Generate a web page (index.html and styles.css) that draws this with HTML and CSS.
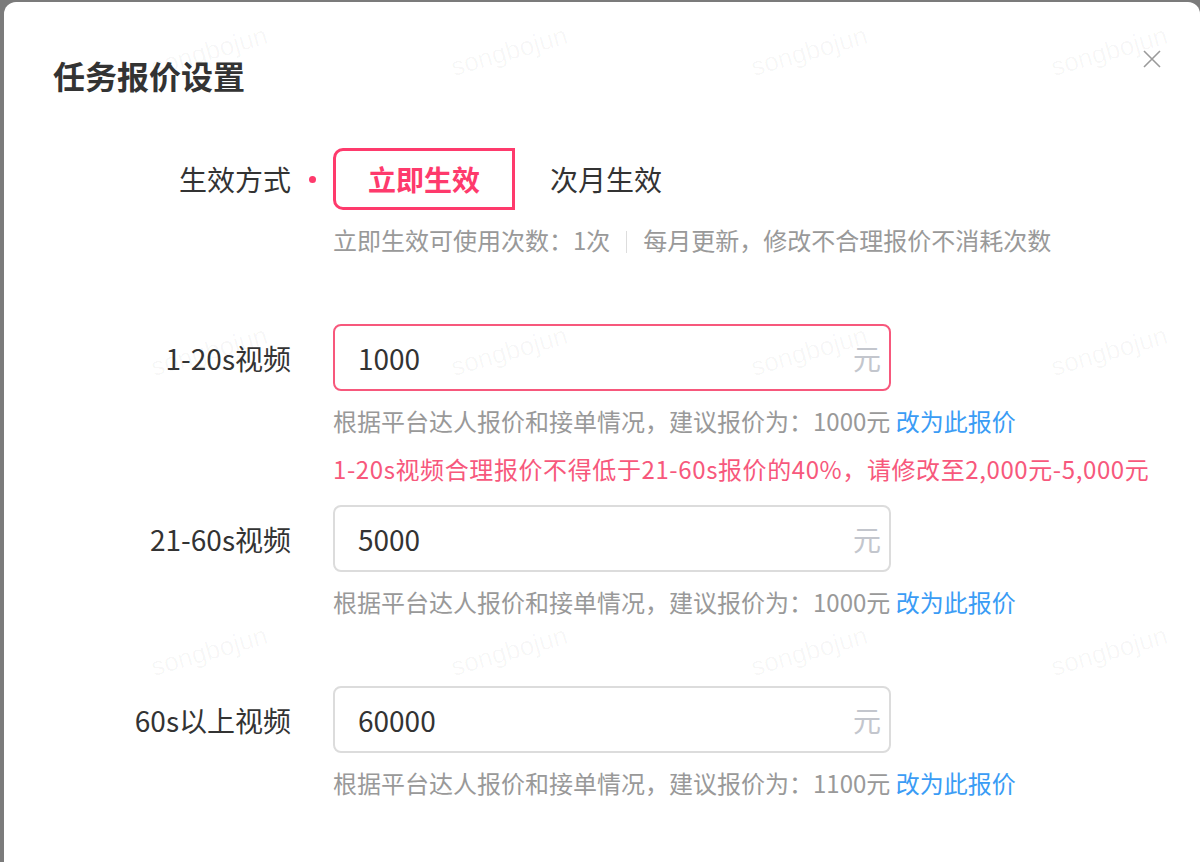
FILE: index.html
```html
<!DOCTYPE html>
<html lang="zh-CN">
<head>
<meta charset="utf-8">
<title>任务报价设置</title>
<link rel="stylesheet" href="styles.css">
</head>
<body>
<div class="modal">
  <h1 class="title">任务报价设置</h1>
  <button class="close" aria-label="关闭">
    <svg width="18" height="18" viewBox="0 0 18 18"><path d="M1 1 L17 17 M17 1 L1 17" stroke="#9a9a9a" stroke-width="1.6" fill="none"/></svg>
  </button>

  <div class="form">
    <div class="item">
      <div class="label radio-h">生效方式</div>
      <div class="mark radio-h"><span class="dot"></span></div>
      <div class="control">
        <div class="radio-group">
          <div class="radio active">立即生效</div>
          <div class="radio">次月生效</div>
        </div>
        <div class="hint">立即生效可使用次数：1次<span class="sep"></span>每月更新，修改不合理报价不消耗次数</div>
      </div>
    </div>

    <div class="item item-error">
      <div class="label">1-20s视频</div>
      <div class="mark"></div>
      <div class="control">
        <div class="input error"><span class="value">1000</span><span class="unit">元</span></div>
        <div class="hint">根据平台达人报价和接单情况，建议报价为：1000元 <a class="link">改为此报价</a></div>
        <div class="err">1-20s视频合理报价不得低于21-60s报价的40%，请修改至2,000元-5,000元</div>
      </div>
    </div>

    <div class="item">
      <div class="label">21-60s视频</div>
      <div class="mark"></div>
      <div class="control">
        <div class="input"><span class="value">5000</span><span class="unit">元</span></div>
        <div class="hint">根据平台达人报价和接单情况，建议报价为：1000元 <a class="link">改为此报价</a></div>
      </div>
    </div>

    <div class="item">
      <div class="label">60s以上视频</div>
      <div class="mark"></div>
      <div class="control">
        <div class="input"><span class="value">60000</span><span class="unit">元</span></div>
        <div class="hint">根据平台达人报价和接单情况，建议报价为：1100元 <a class="link">改为此报价</a></div>
      </div>
    </div>
  </div>

  <div class="watermarks" aria-hidden="true">
    <span class="wm" style="left:155px;top:54px">songbojun</span>
    <span class="wm" style="left:455px;top:54px">songbojun</span>
    <span class="wm" style="left:755px;top:54px">songbojun</span>
    <span class="wm" style="left:1055px;top:54px">songbojun</span>
    <span class="wm" style="left:155px;top:354px">songbojun</span>
    <span class="wm" style="left:455px;top:354px">songbojun</span>
    <span class="wm" style="left:755px;top:354px">songbojun</span>
    <span class="wm" style="left:1055px;top:354px">songbojun</span>
    <span class="wm" style="left:155px;top:654px">songbojun</span>
    <span class="wm" style="left:455px;top:654px">songbojun</span>
    <span class="wm" style="left:755px;top:654px">songbojun</span>
    <span class="wm" style="left:1055px;top:654px">songbojun</span>
  </div>
</div>
</body>
</html>
```

FILE: styles.css
```css
* { box-sizing: border-box; }
html, body { margin: 0; padding: 0; }
body {
  background: #7b7b7b;
  width: 1200px;
  height: 862px;
  overflow: hidden;
  font-family: "Noto Sans CJK SC", "Noto Sans", sans-serif;
  color: #333;
}
.modal {
  position: relative;
  margin: 2px 0 0 4px;
  width: 1196px;
  height: 900px;
  background: #fff;
  border-radius: 12px 12px 0 0;
  padding: 51px 0 0 49px;
}
.title {
  margin: 0;
  font-size: 32px;
  line-height: 44px;
  font-weight: 700;
  color: #333;
}
.close {
  position: absolute;
  left: 1139px;
  top: 48px;
  width: 18px;
  height: 18px;
  padding: 0;
  border: 0;
  background: none;
}
.close svg { display: block; }
.form {
  margin: 51px 0 0 -49px;
}
.item {
  display: flex;
  margin-bottom: 67px;
}
.item-error { margin-bottom: 19px; }
.label {
  width: 287px;
  height: 67px;
  display: flex;
  align-items: center;
  justify-content: flex-end;
  font-size: 28px;
  color: #333;
}
.mark {
  width: 42px;
  height: 67px;
  display: flex;
  align-items: center;
  justify-content: center;
}
.radio-h { height: 62px; }
.dot {
  width: 7px;
  height: 7px;
  border-radius: 50%;
  background: #fe3a6c;
}
.control { width: 860px; }
.radio-group { display: flex; }
.radio {
  width: 182px;
  height: 62px;
  display: flex;
  align-items: center;
  justify-content: center;
  font-size: 28px;
  color: #333;
}
.radio.active {
  border: 3px solid #fe3a6c;
  border-radius: 10px 0 0 10px;
  color: #fe3a6c;
  font-weight: 700;
}
.hint {
  margin-top: 13px;
  font-size: 24px;
  line-height: 34px;
  color: #999;
  white-space: nowrap;
}
.radio-group + .hint { margin-top: 13px; }
.sep {
  display: inline-block;
  width: 1px;
  height: 22px;
  background: #ddd;
  margin: 0 16px;
  vertical-align: -3px;
}
.link { color: #3a9cf5; }
.err {
  margin-top: 14px;
  font-size: 24px;
  line-height: 34px;
  color: #f7587c;
  white-space: nowrap;
  letter-spacing: 0.6px;
}
.input {
  width: 558px;
  height: 67px;
  border: 2px solid #dcdcdc;
  border-radius: 8px;
  display: flex;
  align-items: center;
  justify-content: space-between;
  padding: 0 8px 0 23px;
  font-size: 28px;
}
.input.error { border-color: #f7587c; }
.value { color: #333; }
.unit { color: #c3c6cd; }
.watermarks {
  position: absolute;
  left: -4px;
  top: -2px;
  width: 1200px;
  height: 862px;
  pointer-events: none;
  overflow: hidden;
}
.wm {
  position: absolute;
  font-family: "Liberation Sans", sans-serif;
  font-size: 26px;
  line-height: 1;
  color: rgba(0, 0, 0, 0.035);
  transform: rotate(-16deg);
  transform-origin: left bottom;
  white-space: nowrap;
}
```
